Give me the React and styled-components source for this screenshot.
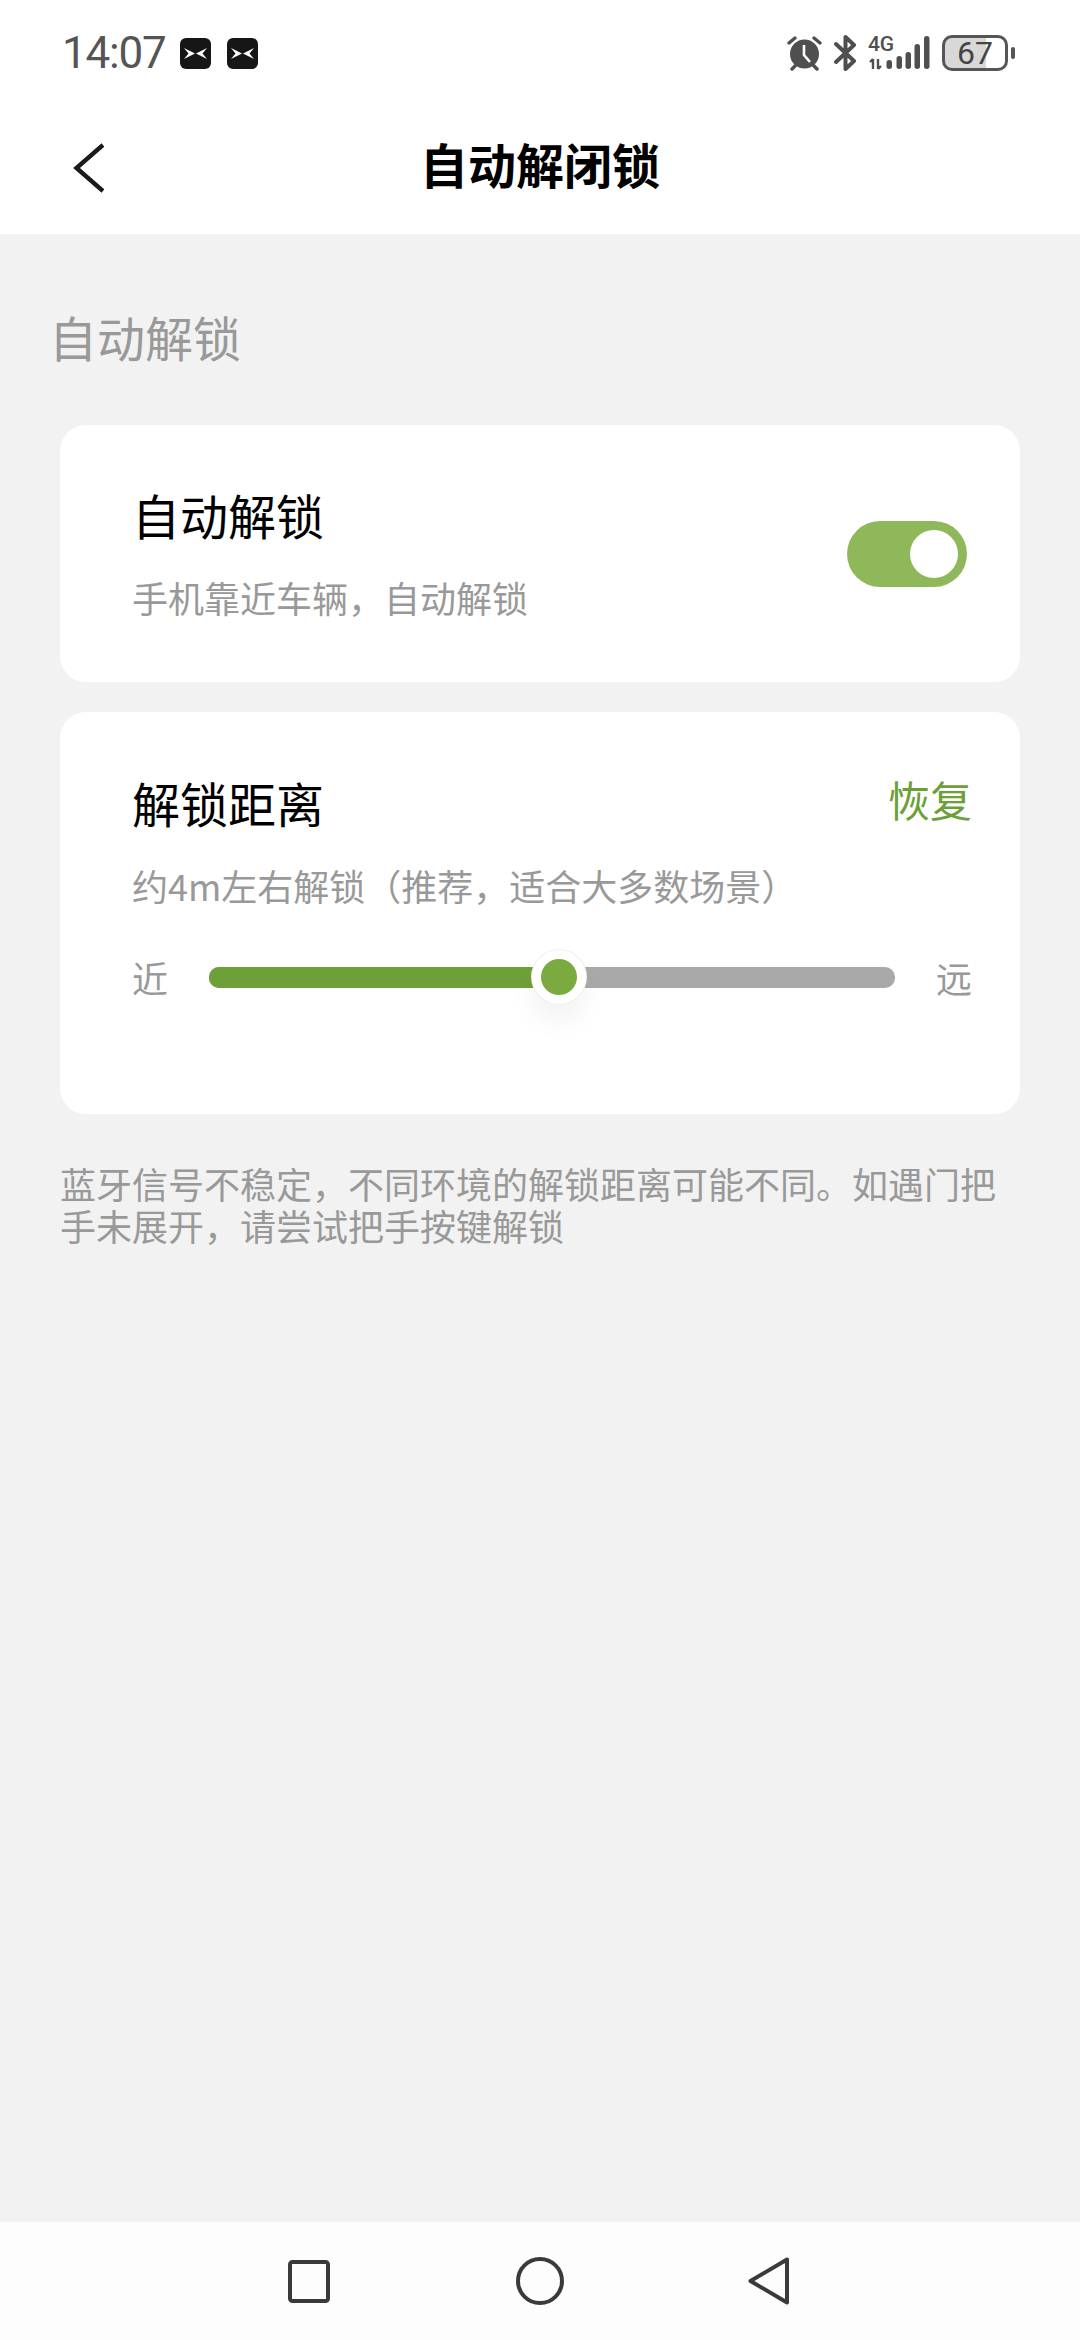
import React from 'react'
import styled, { createGlobalStyle } from 'styled-components'

const GlobalStyle = createGlobalStyle`
  html, body {
    margin: 0;
    padding: 0;
    background: #f2f2f2;
  }
  body {
    font-family: 'Noto Sans CJK SC', 'Noto Sans', sans-serif;
  }
`

const Page = styled.div`
  width: 1080px;
  height: 2340px;
  display: flex;
  flex-direction: column;
  overflow: hidden;
`

const StatusBar = styled.div`
  height: 100px;
  background: #fff;
  display: flex;
  align-items: center;
  justify-content: space-between;
  padding: 6px 65px 0 62px;
  box-sizing: border-box;
`

const StatusGroup = styled.div`
  display: flex;
  align-items: center;
  gap: ${(p) => p.$gap}px;
`

const Time = styled.span`
  font-family: Roboto, sans-serif;
  font-size: 44px;
  line-height: 50px;
  color: #555;
  letter-spacing: -1.2px;
  margin-right: -2px;
`

const NavBar = styled.div`
  height: 134px;
  background: #fff;
  display: grid;
  grid-template-columns: 1fr auto 1fr;
  align-items: center;
`

const BackButton = styled.div`
  padding: 2px 0 0 72px;
  display: flex;
`

const NavTitle = styled.h1`
  margin: 0;
  padding-bottom: 8px;
  font-size: 48px;
  line-height: 60px;
  font-weight: 700;
  color: #000;
`

const Main = styled.main`
  flex: 1;
  padding: 72px 60px 0;
  background: #f2f2f2;
`

const SectionLabel = styled.div`
  margin: 0 0 59px -11px;
  font-size: 48px;
  line-height: 60px;
  color: #999;
`

const Card = styled.section`
  background: #fff;
  border-radius: 26px;
  box-sizing: border-box;
  height: ${(p) => p.$height}px;
  margin-bottom: 30px;
`

const ToggleCard = styled(Card)`
  display: flex;
  align-items: center;
  justify-content: space-between;
  padding: 0 53px 0 72px;
`

const ToggleText = styled.div`
  padding-bottom: 3px;
`

const DistanceCard = styled(Card)`
  padding: 60px 48px 0 72px;
`

const RowBetween = styled.div`
  display: flex;
  justify-content: space-between;
  align-items: flex-start;
`

const CardTitle = styled.div`
  font-size: 48px;
  line-height: 60px;
  color: #000;
`

const CardSub = styled.div`
  margin-top: 30px;
  font-size: 36px;
  line-height: 46px;
  color: #999;
`

const ResetLink = styled.span`
  margin-top: 1px;
  font-size: 42px;
  line-height: 52px;
  color: #6c9f38;
`

const Switch = styled.div`
  position: relative;
  width: 120px;
  height: 66px;
  border-radius: 33px;
  background: #8fb85a;
`

const SwitchKnob = styled.div`
  position: absolute;
  top: 9px;
  right: 9px;
  width: 48px;
  height: 48px;
  border-radius: 50%;
  background: #fff;
`

const SliderRow = styled.div`
  margin-top: 39px;
  height: 60px;
  display: flex;
  align-items: center;
  gap: 41px;
`

const SliderEnd = styled.span`
  font-size: 36px;
  line-height: 60px;
  color: #999;
`

const Track = styled.div`
  position: relative;
  flex: 1;
  height: 21px;
  border-radius: 10px;
  background: #a9a9a9;
`

const TrackFill = styled.div`
  height: 100%;
  border-radius: 10px 0 0 10px;
  background: #6ea038;
`

const Thumb = styled.div`
  position: absolute;
  top: 50%;
  width: 54px;
  height: 54px;
  transform: translate(-50%, -50%);
  border-radius: 50%;
  background: #fff;
  box-shadow: 0 0 0 1px #f0f0ea, 0 18px 26px rgba(0, 0, 0, 0.05);
  display: flex;
  align-items: center;
  justify-content: center;
  &::after {
    content: '';
    width: 36px;
    height: 36px;
    border-radius: 50%;
    background: #7bab40;
  }
`

const Note = styled.p`
  margin: 48px 0 0;
  width: 950px;
  font-size: 36px;
  line-height: 42px;
  color: #999;
`

const BottomBar = styled.nav`
  height: 118px;
  background: #fdfdfd;
  display: flex;
  align-items: center;
  padding-left: 288px;
`

const NavIcon = styled.svg`
  display: block;
  flex: none;
  margin-right: ${(p) => p.$after || 0}px;
`

const Svg = styled.svg`
  display: block;
  flex: none;
`

const NetworkWrap = styled.div`
  position: relative;
  width: 62px;
  height: 34px;
`

const NetworkLabel = styled.span`
  position: absolute;
  left: 0;
  top: -2px;
  font-family: Roboto, sans-serif;
  font-weight: 500;
  font-size: 21px;
  line-height: 20px;
  letter-spacing: -0.3px;
  color: #4f4f4f;
`

const Battery = styled.div`
  width: 66px;
  height: 36px;
  box-sizing: border-box;
  border: 3px solid #555;
  border-radius: 10px;
  font-family: Roboto, sans-serif;
  font-size: 32px;
  line-height: 30px;
  color: #444;
  text-align: center;
  background: linear-gradient(to right, #d8d8d8 0 41px, #fff 41px);
`

const BatteryNub = styled.div`
  width: 4px;
  height: 12px;
  margin-left: 3px;
  border-radius: 2px;
  background: #555;
`

const BatteryWrap = styled.div`
  display: flex;
  align-items: center;
`

const BrandIcon = () => (
  <Svg width="31" height="31" viewBox="0 0 31 31">
    <rect width="31" height="31" rx="6" fill="#161616" />
    <path
      d="M4 10 L15 15.500 L4 21 L8.500 15.500 Z M27 10 L16 15.500 L27 21 L22.500 15.500 Z"
      fill="#fff"
    />
  </Svg>
)

const AlarmIcon = () => (
  <Svg width="35" height="35" viewBox="0 0 35 35">
    <circle cx="17.500" cy="18" r="14.500" fill="#4f4f4f" />
    <path d="M17 9v10l6 7" fill="none" stroke="#fff" strokeWidth="2.6" />
    <path
      d="M2 7l6-5M33 7l-6-5M5 33l3.500-3.500M30 33l-3.500-3.500"
      fill="none"
      stroke="#4f4f4f"
      strokeWidth="3.400"
      strokeLinecap="round"
    />
  </Svg>
)

const BluetoothIcon = () => (
  <Svg width="22" height="36" viewBox="0 0 22 36">
    <path
      d="M2 9l18 17-8.500 8V2L20 10 2 27"
      fill="none"
      stroke="#4f4f4f"
      strokeWidth="4"
      strokeLinecap="round"
      strokeLinejoin="round"
    />
  </Svg>
)

const NetworkIcon = () => (
  <NetworkWrap>
    <NetworkLabel>4G</NetworkLabel>
    <Svg width="62" height="34" viewBox="0 0 62 34">
      <path
        d="M5 23v10M2 26l3-3M10 23v10M13 30l-3 3"
        fill="none"
        stroke="#4f4f4f"
        strokeWidth="2.400"
      />
      <g fill="#4f4f4f">
        <rect x="18.500" y="24" width="5.500" height="9" rx="2.700" />
        <rect x="28.500" y="20" width="5.500" height="13" rx="2.700" />
        <rect x="37.500" y="16" width="5.500" height="17" rx="2.700" />
        <rect x="46.500" y="8" width="5.500" height="25" rx="2.700" />
        <rect x="56" y="0" width="5.500" height="33" rx="2.700" />
      </g>
    </Svg>
  </NetworkWrap>
)

const unlockDistance = 51

export default function App() {
  return (
    <Page>
      <GlobalStyle />
      <StatusBar>
        <StatusGroup $gap={16}>
          <Time>14:07</Time>
          <BrandIcon />
          <BrandIcon />
        </StatusGroup>
        <StatusGroup $gap={12}>
          <AlarmIcon />
          <BluetoothIcon />
          <NetworkIcon />
          <BatteryWrap>
            <Battery>67</Battery>
            <BatteryNub />
          </BatteryWrap>
        </StatusGroup>
      </StatusBar>

      <NavBar>
        <BackButton>
          <Svg width="32" height="50" viewBox="0 0 32 50">
            <path d="M31 2L4.500 25 31 48" fill="none" stroke="#1a1a1a" strokeWidth="4.400" />
          </Svg>
        </BackButton>
        <NavTitle>自动解闭锁</NavTitle>
        <div />
      </NavBar>

      <Main>
        <SectionLabel>自动解锁</SectionLabel>

        <ToggleCard $height={257}>
          <ToggleText>
            <CardTitle>自动解锁</CardTitle>
            <CardSub>手机靠近车辆，自动解锁</CardSub>
          </ToggleText>
          <Switch>
            <SwitchKnob />
          </Switch>
        </ToggleCard>

        <DistanceCard $height={402}>
          <RowBetween>
            <CardTitle>解锁距离</CardTitle>
            <ResetLink>恢复</ResetLink>
          </RowBetween>
          <CardSub>约4m左右解锁（推荐，适合大多数场景）</CardSub>
          <SliderRow>
            <SliderEnd>近</SliderEnd>
            <Track>
              <TrackFill style={{ width: `${unlockDistance}%` }} />
              <Thumb style={{ left: `${unlockDistance}%` }} />
            </Track>
            <SliderEnd>远</SliderEnd>
          </SliderRow>
        </DistanceCard>

        <Note>蓝牙信号不稳定，不同环境的解锁距离可能不同。如遇门把手未展开，请尝试把手按键解锁</Note>
      </Main>

      <BottomBar>
        <NavIcon $after={186} width="42" height="43" viewBox="0 0 42 43">
          <rect x="2" y="2" width="38" height="39" rx="2.500" fill="none" stroke="#3a3a3a" strokeWidth="4" />
        </NavIcon>
        <NavIcon $after={184} width="48" height="48" viewBox="0 0 48 48">
          <circle cx="24" cy="24" r="22" fill="none" stroke="#3a3a3a" strokeWidth="4" />
        </NavIcon>
        <NavIcon width="42" height="48" viewBox="0 0 42 48">
          <path
            d="M39 2.500 L2.500 24 L39 45.500 Z"
            fill="none"
            stroke="#3a3a3a"
            strokeWidth="4"
            strokeLinejoin="round"
          />
        </NavIcon>
      </BottomBar>
    </Page>
  )
}
